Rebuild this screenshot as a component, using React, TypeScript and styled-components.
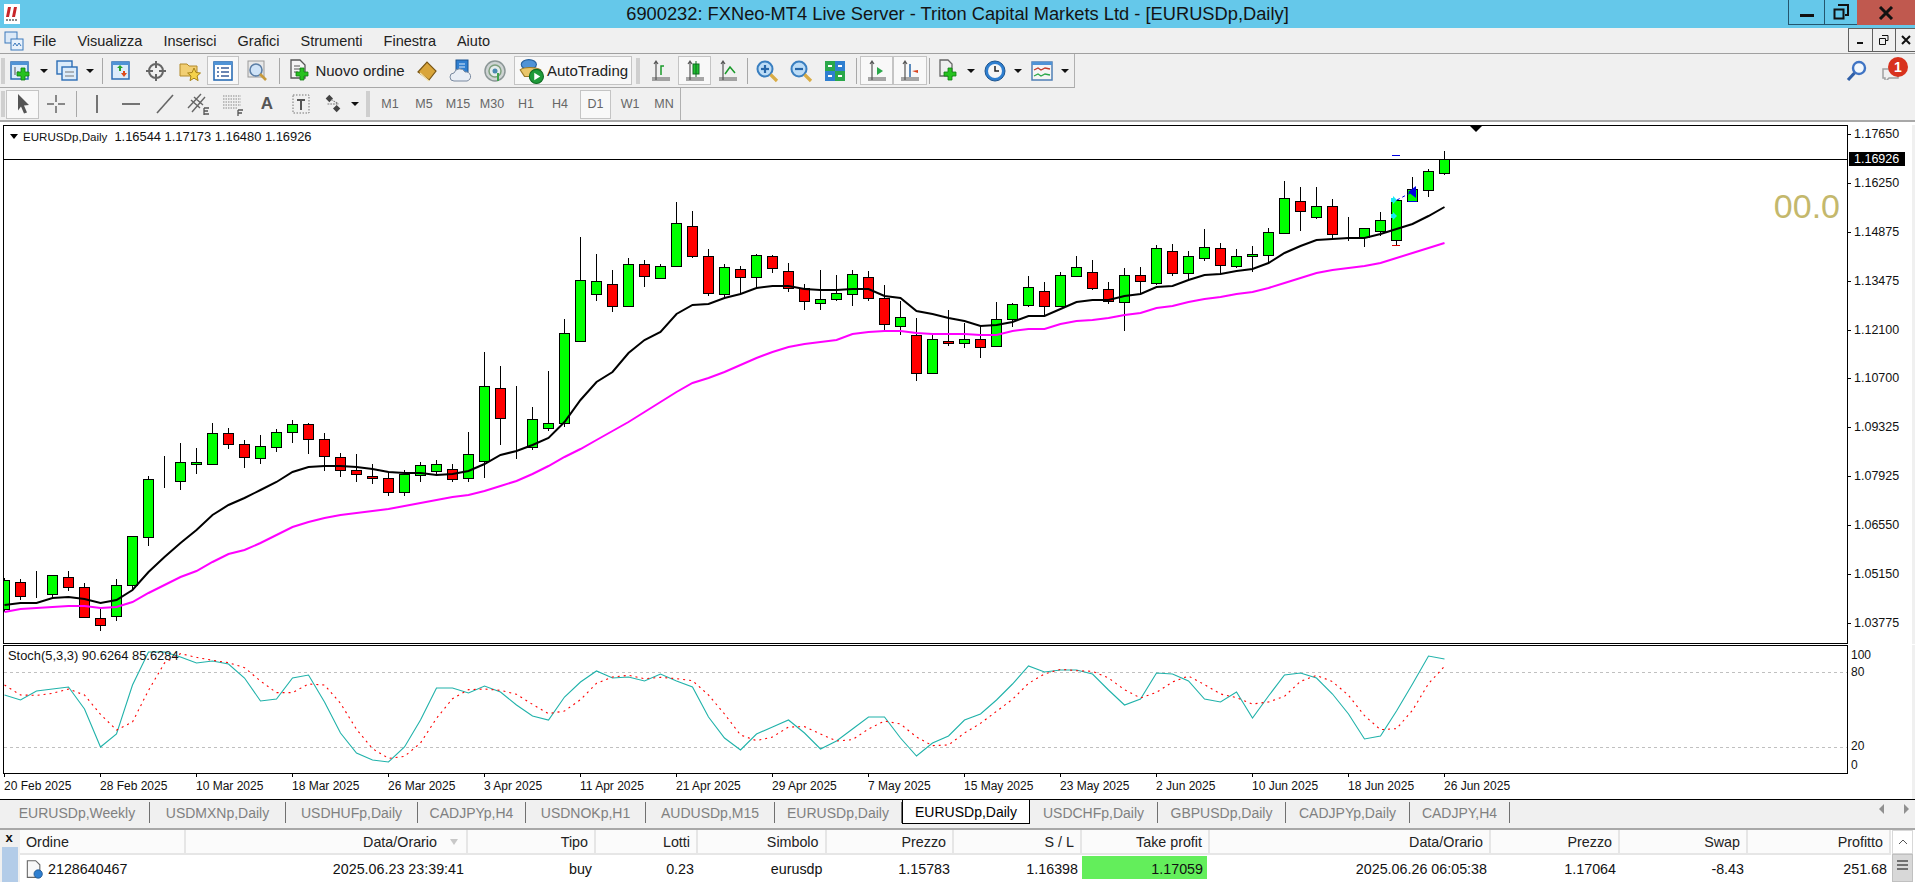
import styled, { createGlobalStyle } from "styled-components";

const GlobalStyle = createGlobalStyle`
  html, body { margin: 0; padding: 0; background: #f0f0f0; overflow: hidden; }
  body { font-family: "Liberation Sans", Arial, sans-serif; color: #111; }
  * { box-sizing: border-box; }
`;

const Page = styled.div`
  width: 1915px;
  height: 882px;
  display: flex;
  flex-direction: column;
  overflow: hidden;
`;

/* title bar */
const TitleBar = styled.div`
  height: 28px;
  flex: none;
  background: #65c8ea;
  position: relative;
  display: flex;
  align-items: center;
  justify-content: center;
  font-size: 18.3px;
  color: #141414;
`;
const AppLogo = styled.div`
  position: absolute;
  left: 4px;
  top: 4px;
  width: 16px;
  height: 20px;
`;
const WinControls = styled.div`
  position: absolute;
  right: 0;
  top: 0;
  height: 25px;
  display: flex;
`;
const WinBtn = styled.div<{ $w: number; $close?: boolean }>`
  width: ${(p) => p.$w}px;
  height: 25px;
  display: flex;
  align-items: center;
  justify-content: center;
  background: ${(p) => (p.$close ? "#c0594f" : "transparent")};
  border-left: ${(p) => (p.$close ? "none" : "1px solid #24566e")};
  border-bottom: ${(p) => (p.$close ? "none" : "1px solid #24566e")};
`;

/* menu */
const MenuBar = styled.div`
  height: 26px;
  flex: none;
  border-bottom: 1px solid #a0a0a0;
  display: flex;
  align-items: center;
  font-size: 14.5px;
  color: #222;
  padding-left: 4px;
`;
const MenuIcon = styled.div`
  width: 20px;
  height: 20px;
  margin-right: 9px;
`;
const MenuItem = styled.span`
  margin-right: 21px;
`;
const MdiControls = styled.div`
  margin-left: auto;
  display: flex;
  align-self: flex-start;
  height: 24px;
`;
const MdiBtn = styled.div<{ $w: number }>`
  width: ${(p) => p.$w}px;
  height: 24px;
  border: 1px solid #606060;
  border-right-width: 0;
  display: flex;
  align-items: center;
  justify-content: center;
`;

/* toolbars */
const ToolRow = styled.div<{ $last?: boolean }>`
  height: 34px;
  flex: none;
  display: flex;
  border-bottom: ${(p) => (p.$last ? "2px solid #a8a8a8" : "none")};
`;
const ToolGroup = styled.div<{ $w: number; $line?: boolean }>`
  width: ${(p) => p.$w}px;
  display: flex;
  align-items: center;
  border-right: 1px solid #b0b0b0;
  border-bottom: ${(p) => (p.$line ? "1px solid #a8a8a8" : "none")};
`;
const Grip = styled.div<{ $w?: number }>`
  width: ${(p) => p.$w ?? 6}px;
  height: 26px;
  flex: none;
  background-image: radial-gradient(#a8a8a8 0.6px, transparent 0.8px);
  background-size: 2px 2px;
  background-clip: content-box;
  padding: 0 ${(p) => ((p.$w ?? 6) - 4) / 2}px;
`;
const ToolBtn = styled.div<{ $w: number; $active?: boolean; $muted?: boolean; $gapLeft?: number }>`
  width: ${(p) => p.$w}px;
  height: 29px;
  flex: none;
  display: flex;
  align-items: center;
  justify-content: center;
  gap: 3px;
  margin-left: ${(p) => p.$gapLeft ?? 0}px;
  font-size: 15px;
  color: ${(p) => (p.$muted ? "#666" : "#222")};
  background: ${(p) => (p.$active ? "#f8f8f8" : "transparent")};
  border: 1px solid ${(p) => (p.$active ? "#c4c4c4" : "transparent")};
`;
const TfBtn = styled(ToolBtn)`
  font-size: 12.5px;
`;
const DrawLetter = styled.strong`
  font-size: 17px;
  color: #555;
`;
const Sep = styled.div<{ $w: number }>`
  width: ${(p) => p.$w}px;
  height: 26px;
  flex: none;
  display: flex;
  justify-content: center;
  &::before {
    content: "";
    width: 1px;
    background: #a8a8a8;
  }
`;
const DropArrow = styled.span`
  width: 0;
  height: 0;
  margin-left: 4px;
  border-left: 4px solid transparent;
  border-right: 4px solid transparent;
  border-top: 4px solid #111;
`;
const RightTools = styled.div`
  margin-left: auto;
  display: flex;
  align-items: center;
  gap: 12px;
  padding-right: 7px;
`;
const Badge = styled.div`
  position: relative;
  width: 28px;
  height: 30px;
`;
const BadgeDot = styled.span`
  position: absolute;
  right: 0;
  top: 1px;
  width: 20px;
  height: 20px;
  border-radius: 50%;
  background: #d8321e;
  color: #fff;
  font-size: 14px;
  font-weight: 700;
  display: flex;
  align-items: center;
  justify-content: center;
`;

/* chart */
const ChartWindow = styled.div`
  height: 678px;
  flex: none;
  background: #fff;
  border-bottom: 1px solid #000;
  padding: 3px 0 0 3px;
  display: grid;
  grid-template-columns: 1845px 1fr;
  grid-template-rows: 519px 129px 1fr;
  row-gap: 1px;
`;
const Pane = styled.div`
  position: relative;
  border: 1px solid #000;
  overflow: hidden;
  display: flex;
`;
const Legend = styled.div`
  position: absolute;
  left: 6px;
  top: 3px;
  display: flex;
  align-items: center;
  gap: 5px;
  font-size: 12.9px;
  white-space: pre;
`;
const LegendSymbol = styled.span`
  font-size: 11.6px;
  margin-right: 2px;
`;
const LegendMark = styled.span`
  width: 0;
  height: 0;
  border-left: 4px solid transparent;
  border-right: 4px solid transparent;
  border-top: 5px solid #000;
`;
const SpreadValue = styled.div`
  position: absolute;
  right: 7px;
  top: 60px;
  font-size: 34px;
  line-height: 40px;
  color: #c4b86c;
`;
const StochLegend = styled.div`
  position: absolute;
  left: 4px;
  top: 2px;
  font-size: 12.9px;
  white-space: pre;
`;
const PriceAxis = styled.div`
  position: relative;
  display: flex;
  flex-direction: column;
  justify-content: space-between;
  padding: 1px 0 13px 0;
  border-right: 3px solid #f0f0f0;
`;
const AxisLabel = styled.div`
  position: relative;
  height: 16px;
  line-height: 16px;
  padding-left: 6px;
  font-size: 12.5px;
  &::before {
    content: "";
    position: absolute;
    left: 0;
    top: 8px;
    width: 3px;
    height: 1px;
    background: #000;
  }
`;
const PriceTag = styled.div`
  position: absolute;
  left: 1px;
  top: 27px;
  width: 56px;
  height: 14px;
  line-height: 14px;
  padding-left: 5px;
  background: #000;
  color: #fff;
  font-size: 12.5px;
`;
const StochAxis = styled.div`
  position: relative;
  border-right: 3px solid #f0f0f0;
`;
const StochLabel = styled.div<{ $top: number }>`
  position: absolute;
  left: 3px;
  top: ${(p) => p.$top}px;
  font-size: 12px;
  line-height: 14px;
`;
const TimeAxis = styled.div`
  grid-column: 1 / 3;
  display: flex;
  margin-top: -1px;
  padding-left: 1px;
  border-right: 3px solid #f0f0f0;
`;
const TimeLabel = styled.div`
  position: relative;
  width: 96px;
  flex: none;
  padding-top: 5px;
  font-size: 12px;
  line-height: 14px;
  white-space: nowrap;
  &::before {
    content: "";
    position: absolute;
    left: 0;
    top: 0;
    width: 1px;
    height: 3px;
    background: #000;
  }
`;

/* tabs */
const TabStrip = styled.div`
  height: 25px;
  flex: none;
  display: flex;
  align-items: flex-end;
  padding: 0 0 1px 5px;
  position: relative;
`;
const Tab = styled.div<{ $w: number; $active?: boolean }>`
  width: ${(p) => p.$w}px;
  flex: none;
  height: ${(p) => (p.$active ? 24 : 21)}px;
  margin-bottom: ${(p) => (p.$active ? 0 : 1)}px;
  display: flex;
  align-items: center;
  justify-content: center;
  font-size: 14px;
  color: ${(p) => (p.$active ? "#000" : "#808080")};
  background: ${(p) => (p.$active ? "#fff" : "transparent")};
  border-right: 1px solid ${(p) => (p.$active ? "#000" : "#707070")};
  border-left: ${(p) => (p.$active ? "1px solid #000" : "none")};
  border-bottom: ${(p) => (p.$active ? "1px solid #000" : "none")};
`;
const TabNav = styled.div`
  position: absolute;
  right: 6px;
  top: 4px;
  display: flex;
  gap: 20px;
`;
const NavArrow = styled.span<{ $dir: "l" | "r" }>`
  width: 0;
  height: 0;
  border-top: 5px solid transparent;
  border-bottom: 5px solid transparent;
  border-left: ${(p) => (p.$dir === "r" ? "5px solid #909090" : "none")};
  border-right: ${(p) => (p.$dir === "l" ? "5px solid #909090" : "none")};
`;

/* terminal */
const Terminal = styled.div`
  flex: 1;
  display: flex;
  border-top: 2px solid #a8a8a8;
  margin-top: 3px;
  background: #fff;
`;
const SideRail = styled.div`
  width: 20px;
  flex: none;
  background: #f0f0f0;
  display: flex;
  flex-direction: column;
  align-items: flex-start;
`;
const RailClose = styled.div`
  width: 18px;
  height: 14px;
  margin-bottom: 3px;
  display: flex;
  justify-content: center;
  align-items: center;
  font-size: 13px;
  font-weight: 700;
`;
const RailBlue = styled.div`
  width: 16px;
  flex: 1;
  margin-left: 2px;
  background: #b3cce8;
`;
const TableWrap = styled.div`
  flex: none;
  display: grid;
  grid-template-columns: 166px 282px 128px 102px 128.5px 127.5px 128px 128px 281px 129px 128px 143px;
  grid-template-rows: 25px 26px;
`;
const HeadCell = styled.div<{ $left?: boolean }>`
  display: flex;
  align-items: center;
  justify-content: ${(p) => (p.$left ? "flex-start" : "flex-end")};
  padding: 0 6px;
  font-size: 14.3px;
  background: #fbfbfb;
  border-right: 2px solid #e6e6e6;
  border-bottom: 2px solid #e6e6e6;
  color: #222;
`;
const SortMark = styled.span`
  width: 0;
  height: 0;
  margin: 0 2px 0 13px;
  border-left: 4px solid transparent;
  border-right: 4px solid transparent;
  border-top: 6px solid #c8c8c8;
`;
const Cell = styled.div<{ $left?: boolean; $hit?: boolean }>`
  display: flex;
  align-items: center;
  gap: 4px;
  justify-content: ${(p) => (p.$left ? "flex-start" : "flex-end")};
  padding: 2px 4px 0;
  font-size: 14.3px;
  color: #111;
  background: ${(p) => (p.$hit ? "#63ee5b" : "transparent")};
  margin: 1px ${(p) => (p.$hit ? 3 : 0)}px 2px 0;
`;
const ScrollBar = styled.div`
  width: 21px;
  flex: none;
  margin-left: 1px;
  background: #f0f0f0;
  display: flex;
  flex-direction: column;
  align-items: center;
`;
const ScrollUp = styled.div`
  height: 24px;
  width: 100%;
  background: #fff;
  border: 1px solid #d8d8d8;
  display: flex;
  align-items: center;
  justify-content: center;
`;
const ScrollThumb = styled.div`
  width: 100%;
  flex: 1;
  background: #d8d8d8;
  border: 1px solid #c0c0c0;
  display: flex;
  flex-direction: column;
  gap: 2px;
  padding: 5px 4px;
`;
const ThumbLine = styled.span`
  height: 2px;
  background: #707070;
`;

/* icons */
const S = 24;
const Ico = ({ children, size = S }: { children: React.ReactNode; size?: number }) => (
  <svg width={size} height={size} viewBox="0 0 24 24">
    {children}
  </svg>
);
const Plus = ({ x = 12, y = 12 }: { x?: number; y?: number }) => (
  <path
    d={`M${x + 4} ${y}h4v4h4v4h-4v4h-4v-4h-4v-4h4z`}
    fill="#26c11f"
    stroke="#0f7d12"
    strokeWidth="0.8"
  />
);
const Win = () => (
  <>
    <rect x="2" y="3" width="17" height="17" fill="#dcecfa" stroke="#2b6db5" strokeWidth="1.5" />
    <rect x="2" y="3" width="17" height="3" fill="#4f93d6" />
  </>
);
const IconNewChart = () => (
  <Ico>
    <Win />
    <path d="M6 8v8M9 12v5" stroke="#555" fill="none" />
    <Plus x={8} y={9} />
  </Ico>
);
const IconProfiles = () => (
  <Ico>
    <rect x="2" y="2" width="15" height="13" fill="#dcecfa" stroke="#2b6db5" strokeWidth="1.4" />
    <rect x="7" y="8" width="15" height="13" fill="#dcecfa" stroke="#2b6db5" strokeWidth="1.4" />
    <path d="M10 13h9M10 17h9" stroke="#777" />
  </Ico>
);
const IconMarket = () => (
  <Ico>
    <Win />
    <path d="M7 9l3-3 3 3h-2v3H9V9z" fill="#22a52a" />
    <path d="M11 14h2v-2h2v2h2l-3 4z" fill="#dd4a1a" />
  </Ico>
);
const IconCross = () => (
  <Ico>
    <circle cx="12" cy="12" r="7" fill="none" stroke="#666" strokeWidth="2" />
    <path d="M12 2v7M12 15v7M2 12h7M15 12h7" stroke="#666" strokeWidth="2" />
  </Ico>
);
const IconFolderStar = () => (
  <Ico>
    <path d="M2 5h7l2 2h8v10H2z" fill="#f2cf73" stroke="#b38a2a" />
    <path d="M16 9l2 4.5 4.5.5-3.4 3 1 4.6-4.1-2.4-4 2.4 1-4.6-3.4-3 4.5-.5z" fill="#f5d24a" stroke="#a88318" />
  </Ico>
);
const IconNavigator = () => (
  <Ico>
    <rect x="3" y="3" width="18" height="18" fill="#fff" stroke="#2b6db5" strokeWidth="1.6" />
    <rect x="3" y="3" width="18" height="3" fill="#4f93d6" />
    <path d="M6 9h2M10 9h8M6 13h2M10 13h8M6 17h2M10 17h8" stroke="#3a5f9a" strokeWidth="1.4" />
  </Ico>
);
const IconTester = () => (
  <Ico>
    <rect x="3" y="2" width="16" height="16" fill="#e8e8e8" stroke="#999" />
    <circle cx="11" cy="11" r="6" fill="#cfe3f7" stroke="#5b7ea6" strokeWidth="1.6" />
    <path d="M15 15l6 6" stroke="#c79a3c" strokeWidth="2.6" />
  </Ico>
);
const IconOrder = () => (
  <Ico>
    <path d="M3 1h9l5 5v13H3z" fill="#f4f4f4" stroke="#555" strokeWidth="1.3" />
    <path d="M6 7h6M6 10h8M6 13h4" stroke="#555" />
    <Plus x={8} y={9} />
  </Ico>
);
const IconBook = () => (
  <Ico>
    <path d="M3 13L12 3l9 9-7 9z" fill="#d9a53a" stroke="#7a5716" strokeWidth="1.2" />
    <path d="M5 14l9 8" stroke="#f5e2a8" strokeWidth="1.4" />
  </Ico>
);
const IconCloud = () => (
  <Ico>
    <rect x="7" y="1" width="12" height="15" fill="#2f7fd0" stroke="#1d558f" />
    <path d="M10 5h6M10 8h6" stroke="#dcecfa" />
    <path d="M5 22a4 4 0 010-8 6 6 0 0111-1 4.5 4.5 0 012 9z" fill="#e9eef5" stroke="#7a8aa0" />
  </Ico>
);
const IconRadar = () => (
  <Ico>
    <circle cx="12" cy="12" r="10" fill="#cfd4d4" stroke="#8b9696" strokeWidth="1.5" />
    <circle cx="12" cy="12" r="6" fill="#e6ecec" stroke="#7ea07e" strokeWidth="1.5" />
    <circle cx="12" cy="12" r="2.5" fill="#4a8ab0" />
    <path d="M15 14v8" stroke="#3fa34d" strokeWidth="2" />
  </Ico>
);
const IconAuto = () => (
  <Ico size={26}>
    <ellipse cx="10" cy="6" rx="7" ry="4.5" fill="#4f93d6" stroke="#245f9c" />
    <path d="M2 11c3-3 15-3 19 0l-4 6H6z" fill="#e9c66a" stroke="#9a7a28" />
    <circle cx="17" cy="17" r="6.5" fill="#1f9a3a" stroke="#0f6a22" />
    <path d="M15 13.5v7l5.500-3.500z" fill="#fff" />
  </Ico>
);
const Axes = ({ children }: { children?: React.ReactNode }) => (
  <Ico>
    <path d="M7 2v19M3 19h18M5 5l2-3 2 3M3 21h18" stroke="#555" strokeWidth="1.2" fill="none" />
    {children}
  </Ico>
);
const IconZoom = ({ plus }: { plus?: boolean }) => (
  <Ico>
    <circle cx="10" cy="10" r="7.5" fill="#bcdcf6" stroke="#3a7fc0" strokeWidth="2" />
    <path d="M6 10h8" stroke="#2766a8" strokeWidth="2.2" />
    {plus && <path d="M10 6v8" stroke="#2766a8" strokeWidth="2.2" />}
    <path d="M15.5 15.5l6.5 6.5" stroke="#d9ac45" strokeWidth="3.2" />
  </Ico>
);
const IconTile = () => (
  <Ico>
    <rect x="2" y="2" width="10" height="10" fill="#2aa84a" />
    <rect x="12" y="2" width="10" height="10" fill="#2f7fd0" />
    <rect x="2" y="12" width="10" height="10" fill="#2f7fd0" />
    <rect x="12" y="12" width="10" height="10" fill="#2aa84a" />
    <path d="M5 7h4M15 7h4M5 17h4M15 17h4" stroke="#fff" strokeWidth="2" />
  </Ico>
);
const IconIndicator = () => (
  <Ico>
    <path d="M4 1h8l4 4v12H4z" fill="#efefef" stroke="#666" strokeWidth="1.3" />
    <Plus x={8} y={9} />
  </Ico>
);
const IconClock = () => (
  <Ico>
    <circle cx="12" cy="12" r="10" fill="#2f7fd0" stroke="#1d558f" />
    <circle cx="12" cy="12" r="7" fill="#f6f6f6" />
    <path d="M12 7v5h4" stroke="#222" strokeWidth="1.5" fill="none" />
  </Ico>
);
const IconTemplate = () => (
  <Ico>
    <rect x="2" y="3" width="20" height="18" fill="#f5f5f5" stroke="#4f7fb5" strokeWidth="1.5" />
    <rect x="2" y="3" width="20" height="3" fill="#4f93d6" />
    <path d="M4 11l4-2 3 2 4-2 5 1" stroke="#c0392b" fill="none" strokeWidth="1.3" />
    <path d="M4 17l4-2 3 2 4-2 5 1" stroke="#2aa84a" fill="none" strokeWidth="1.3" />
  </Ico>
);
const IconSearch = () => (
  <Ico>
    <circle cx="15" cy="9" r="6" fill="#f3f8fd" stroke="#3f74c4" strokeWidth="2.4" />
    <path d="M10.5 14L4 21" stroke="#2f5fa8" strokeWidth="3.2" />
  </Ico>
);
const IconPointer = () => (
  <Ico>
    <path d="M7 2l11 11-5 .5 3 7-3 1-3-7-3 4z" fill="#555" />
  </Ico>
);
const IconCrosshair = () => (
  <Ico>
    <path d="M12 3v7M12 14v7M3 12h7M14 12h7" stroke="#666" strokeWidth="1.5" />
  </Ico>
);
const IconVLine = () => (
  <Ico>
    <path d="M12 3v18" stroke="#666" strokeWidth="1.8" />
  </Ico>
);
const IconHLine = () => (
  <Ico>
    <path d="M3 12h18" stroke="#666" strokeWidth="1.8" />
  </Ico>
);
const IconTrend = () => (
  <Ico>
    <path d="M4 21L20 3" stroke="#666" strokeWidth="1.6" />
  </Ico>
);
const IconChannel = () => (
  <Ico>
    <path d="M1 16L14 2M5 20L18 5M4 8l9 8M7 5l9 8" stroke="#666" strokeWidth="1.4" />
    <path d="M17 16h5M17 19h4M17 22h5M17 16v7" stroke="#555" strokeWidth="1.3" fill="none" />
  </Ico>
);
const IconFibo = () => (
  <Ico>
    <path d="M2 4h18M2 7h18M2 10h18M2 13h18M2 16h14" stroke="#888" strokeDasharray="1.5 1" />
    <path d="M17 18h5M17 18v6M17 21h4" stroke="#555" strokeWidth="1.3" fill="none" />
  </Ico>
);
const IconLabel = () => (
  <Ico>
    <rect x="4" y="3" width="16" height="18" fill="none" stroke="#777" strokeDasharray="1.5 1.5" />
    <path d="M8 8h8M12 8v10" stroke="#555" strokeWidth="2" />
  </Ico>
);
const IconShapes = () => (
  <Ico size={22}>
    <path d="M4 6l4-4 4 4-4 4zM12 17l4-4 4 4-4 4z" fill="#444" />
    <path d="M6 12l12 0M10 7l8 5" stroke="#777" strokeWidth="1.2" strokeDasharray="2 1" />
  </Ico>
);
const IconDoc = () => (
  <Ico size={20}>
    <path d="M4 2h10l5 5v15H4z" fill="#f8f8f8" stroke="#666" strokeWidth="1.3" />
    <circle cx="17" cy="18" r="5" fill="#2f7fd0" stroke="#1d558f" />
  </Ico>
);

/* [high, body top, body bottom, low, colour] as y pixels of the screen */
type Bar = [number, number, number, number, "g" | "r" | "d"];
const bars: Bar[] = [
  [578, 580, 609, 612, "g"], [579, 582, 596, 600, "r"], [571, 593, 593, 598, "d"], [575, 575, 594, 599, "g"],
  [571, 577, 587, 591, "r"], [583, 587, 617, 617, "r"], [608, 618, 625, 631, "r"], [579, 585, 616, 621, "g"],
  [536, 536, 585, 590, "g"], [476, 479, 537, 546, "g"], [456, 480, 480, 488, "d"], [443, 462, 481, 490, "g"],
  [448, 462, 464, 474, "g"], [423, 433, 464, 464, "g"], [428, 433, 444, 449, "r"], [440, 444, 457, 468, "r"],
  [435, 446, 458, 464, "g"], [429, 432, 447, 452, "g"], [420, 424, 432, 443, "g"], [423, 424, 439, 454, "r"],
  [433, 439, 456, 471, "r"], [453, 457, 470, 477, "r"], [454, 470, 474, 482, "r"], [464, 476, 478, 484, "r"],
  [473, 478, 492, 496, "r"], [470, 474, 492, 496, "g"], [462, 465, 475, 482, "g"], [460, 464, 471, 476, "g"],
  [464, 469, 479, 482, "r"], [432, 454, 478, 482, "g"], [352, 386, 461, 478, "g"], [366, 388, 418, 445, "r"],
  [386, 448, 448, 459, "d"], [407, 419, 447, 450, "g"], [371, 423, 428, 431, "g"], [319, 333, 423, 427, "g"],
  [237, 280, 341, 341, "g"], [254, 281, 294, 301, "g"], [270, 284, 306, 312, "r"], [258, 264, 306, 306, "g"],
  [260, 264, 276, 287, "r"], [264, 266, 278, 278, "g"], [202, 223, 266, 266, "g"], [211, 226, 256, 258, "r"],
  [249, 256, 293, 296, "r"], [264, 267, 294, 297, "g"], [266, 269, 277, 294, "r"], [254, 255, 277, 288, "g"],
  [255, 256, 268, 273, "r"], [263, 271, 288, 292, "r"], [284, 288, 301, 310, "r"], [270, 299, 303, 310, "g"],
  [275, 293, 299, 301, "g"], [270, 274, 294, 306, "g"], [271, 277, 298, 301, "r"], [285, 298, 324, 330, "r"],
  [301, 317, 326, 335, "g"], [318, 335, 373, 381, "r"], [334, 339, 373, 374, "g"], [310, 341, 343, 346, "r"],
  [323, 339, 343, 348, "g"], [326, 339, 347, 358, "r"], [302, 319, 346, 346, "g"], [303, 304, 319, 327, "g"],
  [276, 287, 305, 307, "g"], [282, 291, 306, 315, "r"], [272, 275, 306, 306, "g"], [256, 267, 276, 277, "g"],
  [260, 272, 288, 290, "r"], [282, 289, 301, 304, "r"], [268, 275, 302, 331, "g"], [267, 275, 281, 294, "r"],
  [245, 248, 283, 285, "g"], [244, 251, 273, 276, "r"], [251, 256, 273, 280, "g"], [229, 247, 258, 261, "g"],
  [243, 248, 265, 274, "r"], [249, 256, 266, 268, "g"], [246, 254, 256, 272, "g"], [228, 232, 255, 263, "g"],
  [181, 198, 233, 234, "g"], [187, 201, 211, 231, "r"], [187, 206, 217, 219, "g"], [199, 206, 234, 239, "r"],
  [217, 233, 233, 241, "d"], [228, 228, 237, 247, "g"], [212, 220, 231, 236, "g"], [200, 200, 240, 245, "g"],
  [177, 189, 201, 202, "g"], [169, 171, 190, 197, "g"], [151, 159, 173, 175, "g"],
];
const barX = (k: number) => 4.5 + 16 * k;

const maBlack = [
  605, 603, 603, 598, 597, 599, 603, 600, 590, 572, 557, 543, 530, 515, 505, 498, 490, 482, 472, 467, 466, 466, 467,
  469, 472, 473, 473, 475, 474, 471, 464, 455, 451, 445, 438, 422, 400, 382, 372, 353, 340, 332, 314, 305, 304, 298,
  294, 288, 286, 286, 289, 290, 290, 289, 289, 296, 298, 311, 314, 318, 321, 326, 325, 322, 316, 316, 309, 302, 300,
  300, 296, 294, 287, 286, 280, 275, 274, 271, 269, 263, 253, 246, 240, 239, 238, 238, 234, 229, 224, 216, 207,
];
const maMagenta = [
  612, 609, 608, 607, 606, 606, 608, 607, 602, 593, 585, 577, 571, 562, 554, 550, 543, 535, 527, 522, 518, 515, 513,
  511, 509, 506, 503, 500, 497, 495, 491, 486, 481, 474, 466, 457, 449, 440, 431, 422, 412, 402, 392, 383, 378, 372,
  365, 358, 352, 347, 344, 342, 340, 334, 332, 331, 331, 333, 334, 334, 334, 335, 335, 331, 329, 329, 324, 321, 320,
  318, 315, 313, 308, 306, 302, 299, 297, 294, 292, 288, 283, 278, 273, 270, 268, 266, 263, 258, 253, 248, 243,
];
const stochMain = [
  695, 700, 691, 689, 687, 709, 747, 734, 685, 652, 652, 657, 663, 661, 664, 678, 701, 699, 678, 675, 702, 733, 753,
  760, 762, 747, 720, 688, 688, 693, 686, 692, 705, 716, 720, 697, 682, 671, 678, 677, 681, 674, 681, 687, 717, 738,
  750, 734, 727, 720, 733, 749, 741, 729, 717, 717, 738, 756, 743, 736, 720, 714, 700, 684, 666, 672, 670, 670, 674,
  690, 705, 699, 673, 674, 681, 699, 702, 692, 718, 696, 675, 673, 678, 694, 714, 739, 736, 711, 684, 656, 659,
];
const stochSignal = stochMain.map((y, i) =>
  i < 2 ? [685, 695][i] : (y + stochMain[i - 1] + stochMain[i - 2]) / 3
);
const toPoints = (ys: number[]) => ys.map((y, k) => `${barX(k)},${y}`).join(" ");

const prices = ["1.17650", "1.16250", "1.14875", "1.13475", "1.12100", "1.10700", "1.09325", "1.07925", "1.06550", "1.05150", "1.03775"];
const dates = ["20 Feb 2025", "28 Feb 2025", "10 Mar 2025", "18 Mar 2025", "26 Mar 2025", "3 Apr 2025", "11 Apr 2025", "21 Apr 2025", "29 Apr 2025", "7 May 2025", "15 May 2025", "23 May 2025", "2 Jun 2025", "10 Jun 2025", "18 Jun 2025", "26 Jun 2025"];
const tabs: [string, number][] = [
  ["EURUSDp,Weekly", 145], ["USDMXNp,Daily", 136], ["USDHUFp,Daily", 132], ["CADJPYp,H4", 108], ["USDNOKp,H1", 120],
  ["AUDUSDp,M15", 129], ["EURUSDp,Daily", 127], ["EURUSDp,Daily", 128], ["USDCHFp,Daily", 128], ["GBPUSDp,Daily", 128],
  ["CADJPYp,Daily", 124], ["CADJPY,H4", 100],
];
const heads = ["Ordine", "Data/Orario", "Tipo", "Lotti", "Simbolo", "Prezzo", "S / L", "Take profit", "Data/Orario", "Prezzo", "Swap", "Profitto"];
const values = ["2128640467", "2025.06.23 23:39:41", "buy", "0.23", "eurusdp", "1.15783", "1.16398", "1.17059", "2025.06.26 06:05:38", "1.17064", "-8.43", "251.68"];

function PriceChart() {
  return (
    <svg width="1843" height="517" viewBox="4 126 1843 517">
      <line x1="4" x2="1847" y1="159.5" y2="159.5" stroke="#000" shapeRendering="crispEdges" />
      <path d="M1470 126h12l-6 6z" fill="#000" />
      {bars.map(([hi, top, bot, lo, c], k) => {
        const x = barX(k);
        return (
          <g key={k} shapeRendering="crispEdges">
            <line x1={x} x2={x} y1={hi} y2={lo} stroke="#000" />
            <rect
              x={x - 5}
              y={top + 0.5}
              width={10}
              height={bot - top}
              fill={c === "g" ? "#00ff00" : c === "r" ? "#ff0000" : "#000"}
              stroke="#000"
            />
          </g>
        );
      })}
      <polyline points={toPoints(maMagenta)} fill="none" stroke="#ff00ff" strokeWidth="2" />
      <polyline points={toPoints(maBlack)} fill="none" stroke="#000" strokeWidth="2" />
      <g shapeRendering="crispEdges">
        <path d="M1392 155.5h8M1408 201.5h9" stroke="#0000e0" />
        <path d="M1392 245.5h8" stroke="#e00000" />
      </g>
      <path d="M1397 200l15-8" stroke="#0000e0" strokeDasharray="3 3" />
      <path d="M1416 186v12l-8-6z" fill="#0000e0" />
      <path d="M1391 198h2v-2l4 4-4 4v-2h-2zM1391 214h2v-2l4 4-4 4v-2h-2z" fill="#19e8f5" />
    </svg>
  );
}

function StochChart() {
  return (
    <svg width="1843" height="127" viewBox="4 646 1843 127">
      <g stroke="#c0c0c0" strokeDasharray="3 3" shapeRendering="crispEdges">
        <line x1="4" x2="1847" y1="672.5" y2="672.5" />
        <line x1="4" x2="1847" y1="747.5" y2="747.5" />
      </g>
      <polyline points={toPoints(stochMain)} fill="none" stroke="#20b2aa" strokeWidth="1.1" />
      <polyline points={toPoints(stochSignal)} fill="none" stroke="#ff0000" strokeWidth="1.1" strokeDasharray="2 4" />
    </svg>
  );
}

export default function App() {
  return (
    <Page>
      <GlobalStyle />
      <TitleBar>
        <AppLogo>
          <svg width="16" height="20" viewBox="0 0 16 20">
            <rect width="16" height="20" fill="#fff" />
            <path d="M4 3h3L5 13H2zM10 3h3l-2 10H8z" fill="#c8262a" />
            <path d="M2 16h12" stroke="#888" strokeWidth="2" strokeDasharray="2 1" />
          </svg>
        </AppLogo>
        6900232: FXNeo-MT4 Live Server - Triton Capital Markets Ltd - [EURUSDp,Daily]
        <WinControls>
          <WinBtn $w={36}>
            <svg width="16" height="16" viewBox="0 0 16 16">
              <rect x="1" y="10" width="14" height="3" fill="#111" />
            </svg>
          </WinBtn>
          <WinBtn $w={33}>
            <svg width="16" height="16" viewBox="0 0 16 16">
              <path d="M5 1h10v10h-3M1.5 5.5h9v9h-9z" fill="none" stroke="#111" strokeWidth="2" />
            </svg>
          </WinBtn>
          <WinBtn $w={58} $close>
            <svg width="16" height="14" viewBox="0 0 16 14">
              <path d="M2 1l12 12M14 1L2 13" stroke="#111" strokeWidth="3" />
            </svg>
          </WinBtn>
        </WinControls>
      </TitleBar>

      <MenuBar>
        <MenuIcon>
          <svg width="20" height="20" viewBox="0 0 20 20">
            <rect x="1" y="1" width="12" height="11" fill="#dce9f7" stroke="#3b78bb" />
            <rect x="7" y="8" width="12" height="11" fill="#e8f1fb" stroke="#3b78bb" />
            <path d="M9 15l2-3 2 3 2-3 2 3" fill="none" stroke="#3b78bb" />
          </svg>
        </MenuIcon>
        {["File", "Visualizza", "Inserisci", "Grafici", "Strumenti", "Finestra", "Aiuto"].map((m) => (
          <MenuItem key={m}>{m}</MenuItem>
        ))}
        <MdiControls>
          <MdiBtn $w={24}>
            <svg width="12" height="12" viewBox="0 0 12 12">
              <rect x="2" y="8" width="6" height="2" fill="#111" />
            </svg>
          </MdiBtn>
          <MdiBtn $w={23}>
            <svg width="12" height="12" viewBox="0 0 12 12">
              <path d="M4 1.5h6v5H8M1.5 4.5h6v6h-6z" fill="none" stroke="#111" />
            </svg>
          </MdiBtn>
          <MdiBtn $w={20}>
            <svg width="12" height="12" viewBox="0 0 12 12">
              <path d="M2 2l8 8M10 2l-8 8" stroke="#111" strokeWidth="2" />
            </svg>
          </MdiBtn>
        </MdiControls>
      </MenuBar>

      <ToolRow>
        <ToolGroup $w={1075} $line>
          <Grip />
          <ToolBtn $w={44}><IconNewChart /><DropArrow /></ToolBtn>
          <ToolBtn $w={49}><IconProfiles /><DropArrow /></ToolBtn>
          <Sep $w={6} />
          <ToolBtn $w={34}><IconMarket /></ToolBtn>
          <ToolBtn $w={34}><IconCross /></ToolBtn>
          <ToolBtn $w={34}><IconFolderStar /></ToolBtn>
          <ToolBtn $w={32} $active><IconNavigator /></ToolBtn>
          <ToolBtn $w={36}><IconTester /></ToolBtn>
          <Sep $w={8} />
          <ToolBtn $w={127}><IconOrder />Nuovo ordine</ToolBtn>
          <ToolBtn $w={34}><IconBook /></ToolBtn>
          <ToolBtn $w={34}><IconCloud /></ToolBtn>
          <ToolBtn $w={34}><IconRadar /></ToolBtn>
          <ToolBtn $w={118} $active $gapLeft={2}><IconAuto />AutoTrading</ToolBtn>
          <Grip $w={11} />
          <ToolBtn $w={35}><Axes><path d="M12 16v-9h3" stroke="#1a9a2a" strokeWidth="1.5" fill="none" /></Axes></ToolBtn>
          <ToolBtn $w={33} $active><Axes><rect x="10" y="5" width="6" height="10" fill="#1fc02f" stroke="#0f6a22" /><path d="M13 2v16" stroke="#0f6a22" /></Axes></ToolBtn>
          <ToolBtn $w={34}><Axes><path d="M9 15l5-7 5 6" stroke="#1a9a2a" strokeWidth="1.5" fill="none" /></Axes></ToolBtn>
          <Sep $w={5} />
          <ToolBtn $w={34}><IconZoom plus /></ToolBtn>
          <ToolBtn $w={34}><IconZoom /></ToolBtn>
          <ToolBtn $w={34}><IconTile /></ToolBtn>
          <Sep $w={8} />
          <ToolBtn $w={33} $active><Axes><path d="M12 8v8l6-4z" fill="#2aa84a" /></Axes></ToolBtn>
          <ToolBtn $w={34} $active><Axes><path d="M12 5v13" stroke="#2766a8" strokeWidth="1.5" /><path d="M20 11l-6 1 6 2z" fill="#d8421e" /></Axes></ToolBtn>
          <Sep $w={5} />
          <ToolBtn $w={47}><IconIndicator /><DropArrow /></ToolBtn>
          <ToolBtn $w={47}><IconClock /><DropArrow /></ToolBtn>
          <ToolBtn $w={47}><IconTemplate /><DropArrow /></ToolBtn>
        </ToolGroup>
        <RightTools>
          <IconSearch />
          <Badge>
            <svg width="24" height="24" viewBox="0 0 24 24">
              <path d="M3 9h15v9H9l-4 4v-4H3z" fill="#f0f0f0" stroke="#a0a0a0" strokeWidth="1.5" transform="translate(0 4)" />
            </svg>
            <BadgeDot>1</BadgeDot>
          </Badge>
        </RightTools>
      </ToolRow>

      <ToolRow $last>
        <ToolGroup $w={681}>
          <Grip />
          <ToolBtn $w={33} $active><IconPointer /></ToolBtn>
          <ToolBtn $w={33}><IconCrosshair /></ToolBtn>
          <Sep $w={8} />
          <ToolBtn $w={34}><IconVLine /></ToolBtn>
          <ToolBtn $w={34}><IconHLine /></ToolBtn>
          <ToolBtn $w={34}><IconTrend /></ToolBtn>
          <ToolBtn $w={34}><IconChannel /></ToolBtn>
          <ToolBtn $w={34}><IconFibo /></ToolBtn>
          <ToolBtn $w={34}><DrawLetter>A</DrawLetter></ToolBtn>
          <ToolBtn $w={34}><IconLabel /></ToolBtn>
          <ToolBtn $w={45}><IconShapes /><DropArrow /></ToolBtn>
          <Grip $w={10} />
          {["M1", "M5", "M15", "M30", "H1", "H4"].map((t) => (
            <TfBtn key={t} $w={34} $muted>{t}</TfBtn>
          ))}
          <TfBtn $w={31} $active $muted $gapLeft={3}>D1</TfBtn>
          <TfBtn $w={34} $muted $gapLeft={2}>W1</TfBtn>
          <TfBtn $w={34} $muted>MN</TfBtn>
        </ToolGroup>
      </ToolRow>

      <ChartWindow>
        <Pane>
          <PriceChart />
          <Legend>
            <LegendMark />
            <LegendSymbol>EURUSDp,Daily</LegendSymbol>
            1.16544 1.17173 1.16480 1.16926
          </Legend>
          <SpreadValue>00.0</SpreadValue>
        </Pane>
        <PriceAxis>
          {prices.map((p) => (
            <AxisLabel key={p}>{p}</AxisLabel>
          ))}
          <PriceTag>1.16926</PriceTag>
        </PriceAxis>
        <Pane>
          <StochChart />
          <StochLegend>Stoch(5,3,3) 90.6264 85.6284</StochLegend>
        </Pane>
        <StochAxis>
          <StochLabel $top={3}>100</StochLabel>
          <StochLabel $top={20}>80</StochLabel>
          <StochLabel $top={94}>20</StochLabel>
          <StochLabel $top={113}>0</StochLabel>
        </StochAxis>
        <TimeAxis>
          {dates.map((d) => (
            <TimeLabel key={d}>{d}</TimeLabel>
          ))}
        </TimeAxis>
      </ChartWindow>

      <TabStrip>
        {tabs.map(([name, w], i) => (
          <Tab key={i} $w={w} $active={i === 7}>{name}</Tab>
        ))}
        <TabNav>
          <NavArrow $dir="l" />
          <NavArrow $dir="r" />
        </TabNav>
      </TabStrip>

      <Terminal>
        <SideRail>
          <RailClose>x</RailClose>
          <RailBlue />
        </SideRail>
        <TableWrap>
          {heads.map((h, i) => (
            <HeadCell key={i} $left={i === 0}>
              {h}
              {i === 1 && <SortMark />}
            </HeadCell>
          ))}
          {values.map((v, i) => (
            <Cell key={i} $left={i === 0} $hit={i === 7}>
              {i === 0 && <IconDoc />}
              {v}
            </Cell>
          ))}
        </TableWrap>
        <ScrollBar>
          <ScrollUp>
            <svg width="12" height="8" viewBox="0 0 12 8">
              <path d="M2 6l4-4 4 4" fill="none" stroke="#555" />
            </svg>
          </ScrollUp>
          <ScrollThumb>
            <ThumbLine />
            <ThumbLine />
            <ThumbLine />
          </ScrollThumb>
        </ScrollBar>
      </Terminal>
    </Page>
  );
}
